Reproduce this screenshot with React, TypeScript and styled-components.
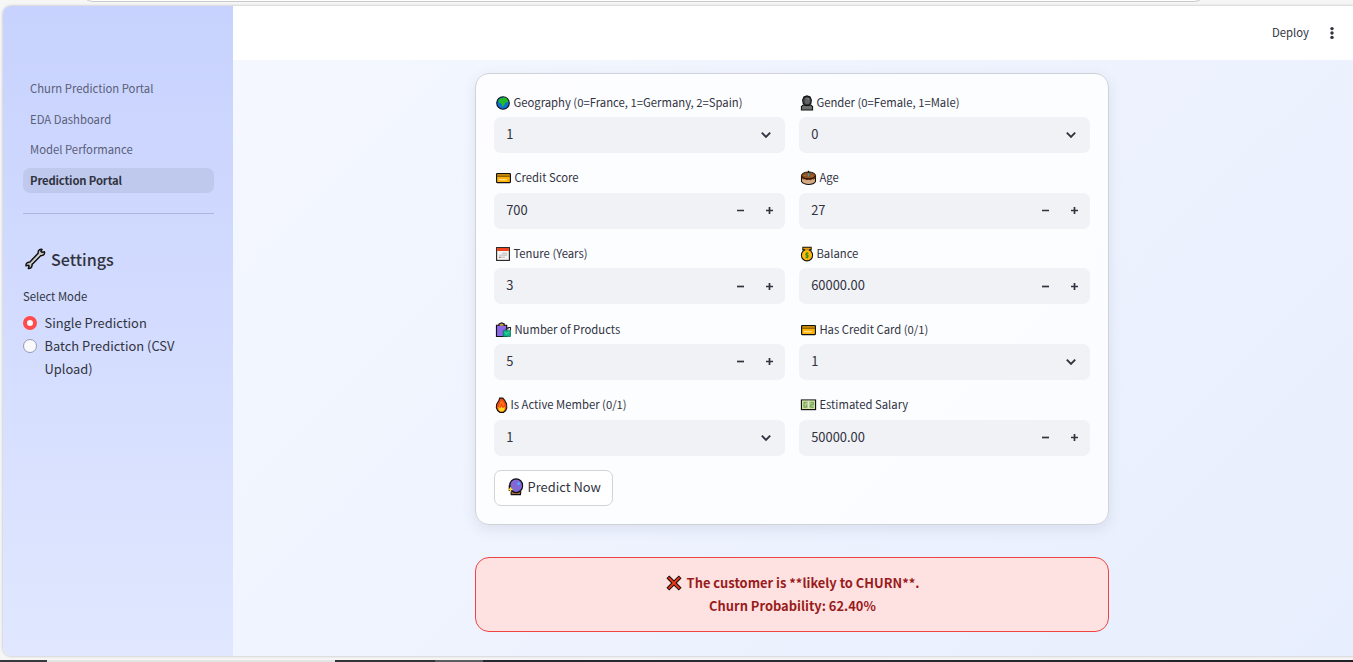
import React, { useState } from "react";
import styled, { createGlobalStyle, css } from "styled-components";

const Global = createGlobalStyle`
  * { box-sizing: border-box; }
  html, body { margin: 0; padding: 0; overflow: hidden; }
  body { background: #f6f6f6; }
  button, input { font: inherit; color: inherit; }
`;

const Screen = styled.div`
  display: flex;
  flex-direction: column;
  width: 1353px;
  height: 662px;
  overflow: hidden;
  background: #f6f6f6;
  color: #31333f;
  font-family: "Noto Sans CJK SC", "Noto Sans", sans-serif;
  font-size: 12.9px;
`;

const BrowserBar = styled.div`
  flex: none;
  display: flex;
  align-items: flex-end;
  height: 2px;
  margin-bottom: 4px;
  padding-left: 80px;
  overflow: hidden;
`;

const AddressBar = styled.div`
  flex: none;
  width: 1127px;
  height: 26px;
  border: 1px solid #c9cbcb;
  border-radius: 13px;
  background: #fff;
`;

const Window = styled.div`
  flex: none;
  display: flex;
  height: 650px;
  margin-left: 3px;
  border-radius: 8px 0 0 8px;
  overflow: hidden;
  box-shadow: 0 0 2px 1px #d5d6d9;
`;

const Sidebar = styled.aside`
  flex: none;
  width: 230px;
  padding: 70px 19px 0 20px;
  background: linear-gradient(180deg, #c7d2fe, #e0e7ff);
`;

const Nav = styled.nav`
  display: flex;
  flex-direction: column;
  gap: 5.6px;
  padding-bottom: 20px;
  border-bottom: 1px solid #adb6dc;
`;

const NavItem = styled.a<{ $active?: boolean }>`
  height: 25px;
  padding: 0 7px;
  border-radius: 7px;
  font-size: 11.3px;
  line-height: 25px;
  white-space: nowrap;
  color: #5a5e78;
  ${(p) => p.$active && css`
    background: #bec9ed;
    color: #31333f;
    font-weight: 700;
    letter-spacing: -0.15px;
  `}
`;

const Heading = styled.h2`
  display: flex;
  align-items: center;
  gap: 5px;
  height: 26px;
  margin: 32px 0 0;
  padding-left: 2px;
  font-size: 16.1px;
  font-weight: 500;
  line-height: 26px;
`;

const GroupLabel = styled.div`
  margin-top: 14px;
  font-size: 11.3px;
  line-height: 21px;
`;

const Options = styled.div`
  margin-top: 4px;
`;

const Radio = styled.label`
  display: flex;
  gap: 7.5px;
  line-height: 23px;
`;

const Dot = styled.span<{ $on: boolean }>`
  flex: none;
  width: 14px;
  height: 14px;
  margin-top: 5px;
  border-radius: 50%;
  background: #fafafc;
  border: ${(p) => (p.$on ? "4.5px solid #ff4b4b" : "1px solid #969bb5")};
`;

const Main = styled.main`
  flex: 1;
  display: flex;
  flex-direction: column;
  background: linear-gradient(135deg, #f5f8ff, #e7eefd);
`;

const Header = styled.header`
  flex: none;
  display: flex;
  justify-content: flex-end;
  align-items: center;
  gap: 20px;
  height: 54px;
  padding-right: 18px;
  background: #fff;
  font-size: 11.3px;
  line-height: 18px;
`;

const HeaderAction = styled.span`
  padding-bottom: 2px;
`;

const Content = styled.div`
  width: 634px;
  margin: 13px 0 0 242px;
`;

const Card = styled.form`
  height: 452px;
  padding: 18px;
  border: 1px solid #d0d2d8;
  border-radius: 14px;
  background: rgba(255, 255, 255, 0.8);
  box-shadow: 0 4px 14px rgba(60, 70, 110, 0.11);
`;

const Grid = styled.div`
  display: grid;
  grid-template-columns: 1fr 1fr;
  column-gap: 14px;
  row-gap: 14.4px;
`;

const Label = styled.div`
  display: flex;
  align-items: center;
  height: 21.6px;
  margin-bottom: 3.6px;
  padding-left: 1px;
  gap: 2.4px;
  font-size: 11.3px;
  line-height: 19px;
  white-space: nowrap;
`;

const LabelText = styled.span`
  padding-bottom: 0.8px;
`;

const Control = styled.div`
  display: flex;
  align-items: center;
  height: 36px;
  padding: 0 12px 0 12.2px;
  border-radius: 7px;
  background: #f0f2f6;
`;

const Value = styled.span`
  flex: 1;
  height: 36px;
  line-height: 34.6px;
`;

const Step = styled.span`
  display: flex;
  justify-content: center;
  width: 29px;
  &:last-child { margin-right: -11px; }
`;

const Predict = styled.button`
  display: flex;
  align-items: center;
  gap: 3.5px;
  width: 119px;
  height: 36px;
  margin-top: 14.4px;
  padding: 0 0 2px 12px;
  border: 1px solid #d3d4d8;
  border-radius: 7px;
  background: #fff;
  white-space: nowrap;
`;

const Alert = styled.div`
  margin-top: 32px;
  height: 75px;
  padding: 13px 0 0 1px;
  border: 1px solid #ef4444;
  border-radius: 14px;
  background: #fee2e2;
  color: #991b1b;
  font-weight: 700;
  line-height: 23px;
`;

const AlertLine = styled.div`
  display: flex;
  justify-content: center;
  align-items: center;
  height: 23px;
  gap: 5px;
`;

const Taskbar = styled.div`
  flex: none;
  display: flex;
  height: 2px;
  margin-top: 4px;
  background: linear-gradient(90deg, #23252b, #2b2b33 60%, #202024);
`;

const TaskPart = styled.span<{ $w: number; $c: string }>`
  width: ${(p) => p.$w}px;
  background: ${(p) => p.$c};
`;

type IconName = "globe" | "person" | "card" | "cake" | "calendar" | "money" | "bags" | "fire" | "cash" | "crystal" | "cross" | "wrench";

const art: Record<IconName, React.ReactNode> = {
  globe: (
    <>
      <circle cx="8" cy="8" r="6.3" fill="#0f6fd6" stroke="#111" strokeWidth="1.1" />
      <path d="M3.6 5 6 3l1.6.4 1.2-1.2 3 1.4 1.6 3-1.6 1-1.6-.2-.6 2.2-1.6 2.2-1-.4-.4-2.6L4.4 8Z" fill="#21bd20" />
    </>
  ),
  person: (
    <>
      <path d="M1.6 15v-3.4L3.6 10h8.8l2 1.6V15Z" fill="#6e6e6e" stroke="#111" strokeWidth="1.2" />
      <path d="M3.6 8.4 3 5l1.4-2.9L8 .9l3.6 1.2L13 5l-.6 3.6L9.8 10.4H6.2Z" fill="#3e3e3e" stroke="#111" strokeWidth="1.2" />
      <circle cx="8.3" cy="5.9" r="3.1" fill="#626262" />
      <path d="M6.8 3.4h3v1.6" fill="none" stroke="#8c8c8c" strokeWidth=".8" />
    </>
  ),
  card: (
    <>
      <rect x="1.5" y="3.6" width="13" height="9" rx=".5" fill="#ffb309" stroke="#111" strokeWidth="1.1" />
      <path d="M2 6.1h12" stroke="#6c460a" strokeWidth="1.2" />
      <path d="M3.5 9.6h7.5" stroke="#ffe08a" strokeWidth="1.3" />
    </>
  ),
  cake: (
    <>
      <path d="M1.4 6v5.6c2.5 3.9 10.9 3.9 13.2 0V6Z" fill="#d4aa85" stroke="#15100d" />
      <path d="M1.6 5.4v3.2l1.8 1 1.2-.4 1.6 1 1.8-.5 1.8.5 1.8-1 1.4.4 1.4-1V5.4Z" fill="#753510" />
      <ellipse cx="8" cy="5.4" rx="6.6" ry="3.4" fill="#95501f" stroke="#15100d" strokeWidth=".9" />
      <path d="M8 3.2v3.4" stroke="#27a7ba" strokeWidth="1.3" />
      <path d="M8 .8v2" stroke="#111" strokeWidth="1.2" />
      <path d="M3.8 5.4h2M10.2 6h2" stroke="#c07a40" strokeWidth=".8" />
    </>
  ),
  calendar: (
    <>
      <rect x="1.6" y="1.6" width="12.8" height="12.8" fill="#f3f3f3" stroke="#222" strokeWidth="1.1" />
      <path d="M2.1 2.1h11.8v2.8H2.1Z" fill="#f0431e" />
      <path d="M7 7.4h5.2M4 9.3h8.2M4 11.2h6" stroke="#cfcfcf" strokeWidth="1.6" />
      <path d="M4 11.4h1.6" stroke="#e07060" strokeWidth="1.3" />
    </>
  ),
  money: (
    <>
      <path d="M3.2 1.3h9.6v2.6H3.2Z" fill="#e49f10" stroke="#141006" strokeWidth="1.1" />
      <ellipse cx="8" cy="9.2" rx="6.4" ry="5.7" fill="#ffb90c" stroke="#141006" strokeWidth="1.2" />
      <path d="M5.6 3.9h4.8" stroke="#ffb90c" strokeWidth="1.2" />
      <path d="M9.8 7.3H7.1L6.6 8.8l2.9 1-.7 1.6H6.3M8.1 6v6.6" fill="none" stroke="#318d18" strokeWidth="1.1" />
    </>
  ),
  bags: (
    <>
      <path d="M1.4 3.2h9.6v11.3H1.4Z" fill="#8c68e9" stroke="#111" strokeWidth="1.1" />
      <path d="M3.8 3.8V2l2.3-1.2L8.6 2v1.8" fill="#d59f4a" stroke="#111" strokeWidth="1.2" />
      <path d="M7.8 8.2h6.8v6.3H7.8Z" fill="#06b58b" stroke="#0f6a55" strokeWidth=".7" />
      <path d="M10.6 8V6.8l1.6.2V5.4h2.4v2.8" fill="#e8e8e8" stroke="#222" />
      <path d="m9.2 10 1.8 2 2.2-2" fill="none" stroke="#48dc70" />
    </>
  ),
  fire: (
    <>
      <path d="M5.6 1.2 9.6 1l2.4 2.4 2.2 3.4.4 4-1.4 2.8-2.8 1.7H6l-2.8-1.7-1.6-3 .4-3.4L4.6 4Z" fill="#f04a16" stroke="#16100d" strokeWidth="1.2" />
      <path d="m7.4 3.2-2 4-.9 4 2-2 1.6-3 1.8 3.4 1.8-1-1.3-3.4Z" fill="#ff7415" />
      <path d="m4.2 9.8 2.2 1.4 1.6-2 1.6 2.1 2.4-1.5-.2 3-2 1.7H6.2l-1.8-1.7Z" fill="#ffda1c" />
    </>
  ),
  cash: (
    <>
      <rect x="1.4" y="3" width="13.2" height="9.6" fill="#b4cf8c" stroke="#151515" strokeWidth="1.2" />
      <rect x="2.4" y="4" width="11.2" height="7.6" fill="none" stroke="#d7e8a8" strokeWidth=".8" />
      <path d="M6.2 5.6H3.8v4.6h2.4V7.8M10 5.6h2.6v2.2H10v2.4h2.6" fill="none" stroke="#6f9a52" strokeWidth=".9" />
      <path d="M8 3.8v8" stroke="#dde6cf" strokeWidth="1.1" />
    </>
  ),
  crystal: (
    <>
      <path d="m3.8 11.8.2 3h8.6l.4-3" fill="#a66a3d" stroke="#111" strokeWidth="1.1" />
      <circle cx="8.6" cy="6.8" r="6.1" fill="#8267d7" stroke="#111" strokeWidth="1.1" />
      <path d="M1.6 6.5h1.8v5H1.6Z" fill="#111" />
      <path d="m3.3 7.6.8 1.7 1.7.8-1.7.8-.8 1.7-.8-1.7-1.7-.8 1.7-.8Z" fill="#ffe32e" />
      <path d="M11 3.5v3M9.5 5h3" stroke="#4bb5ff" />
    </>
  ),
  cross: (
    <path d="m3.2 1.2 4.8 4.7 4.8-4.7 2 2L10.1 8l4.7 4.8-2 2L8 10.1l-4.8 4.7-2-2L5.9 8 1.2 3.2Z" fill="#f03a17" stroke="#24110c" strokeWidth="1.1" />
  ),
  wrench: (
    <>
      <path
        d="M10 3C10 1.5 11.4.7 13 1l-.9 1.5.8.6 1.9-.3c.4 1.4-.4 2.5-1.9 2.7l-1 .1-6.5 6.3v.8c-.2 1.5-1.4 2.4-2.9 2.2l.7-1.7-.7-.6-1.7.4c-.3-1.4.6-2.5 2-2.7l.9-.1L10 3.8Z"
        fill="#c2c2c0"
        stroke="#111"
        strokeWidth="1.1"
        strokeLinejoin="round"
      />
      <path d="m4.8 11.2 6.4-6.4" stroke="#dedede" strokeWidth=".7" />
    </>
  ),
};

function Emoji({ name, width = 16, size = 16 }: { name: IconName; width?: number; size?: number }) {
  return (
    <svg width={width} height={size} viewBox="0 0 16 16" preserveAspectRatio="none" aria-hidden="true">
      {art[name]}
    </svg>
  );
}

const Chevron = () => (
  <svg width="14" height="14" viewBox="0 0 14 14"><path d="m2.8 4.6 4.2 4.2 4.2-4.2" fill="none" stroke="#31333f" strokeWidth="1.9" /></svg>
);
const Minus = () => (
  <svg width="9" height="9" viewBox="0 0 9 9"><path d="M1 4.5h7" stroke="#31333f" strokeWidth="1.7" /></svg>
);
const Plus = () => (
  <svg width="9" height="9" viewBox="0 0 9 9"><path d="M1 4.5h7M4.5 1v7" stroke="#31333f" strokeWidth="1.7" /></svg>
);
const Dots = () => (
  <svg width="6" height="14" viewBox="0 0 6 14" fill="#31333f"><circle cx="3" cy="2.6" r="1.7" /><circle cx="3" cy="7" r="1.7" /><circle cx="3" cy="11.4" r="1.7" /></svg>
);

type FieldData = { icon: IconName; w: number; label: string; value: string; select?: boolean };

const fields: FieldData[] = [
  { icon: "globe", w: 16, label: "Geography (0=France, 1=Germany, 2=Spain)", value: "1", select: true },
  { icon: "person", w: 14, label: "Gender (0=Female, 1=Male)", value: "0", select: true },
  { icon: "card", w: 17, label: "Credit Score", value: "700" },
  { icon: "cake", w: 17, label: "Age", value: "27" },
  { icon: "calendar", w: 16, label: "Tenure (Years)", value: "3" },
  { icon: "money", w: 14, label: "Balance", value: "60000.00" },
  { icon: "bags", w: 17, label: "Number of Products", value: "5" },
  { icon: "card", w: 17, label: "Has Credit Card (0/1)", value: "1", select: true },
  { icon: "fire", w: 13, label: "Is Active Member (0/1)", value: "1", select: true },
  { icon: "cash", w: 17, label: "Estimated Salary", value: "50000.00" },
];

function Field({ icon, w, label, value, select }: FieldData) {
  return (
    <div>
      <Label><Emoji name={icon} width={w} /><LabelText>{label}</LabelText></Label>
      <Control>
        <Value>{value}</Value>
        {select ? <Chevron /> : <><Step><Minus /></Step><Step><Plus /></Step></>}
      </Control>
    </div>
  );
}

const pages = ["Churn Prediction Portal", "EDA Dashboard", "Model Performance", "Prediction Portal"];
const modes = ["Single Prediction", "Batch Prediction (CSV Upload)"];

export default function App() {
  const [mode, setMode] = useState(0);
  return (
    <Screen>
      <Global />
      <BrowserBar><AddressBar /></BrowserBar>
      <Window>
        <Sidebar>
          <Nav>
            {pages.map((p, i) => <NavItem key={p} $active={i === 3}>{p}</NavItem>)}
          </Nav>
          <Heading><Emoji name="wrench" width={21} size={22} />Settings</Heading>
          <GroupLabel>Select Mode</GroupLabel>
          <Options>
            {modes.map((m, i) => (
              <Radio key={m} onClick={() => setMode(i)}><Dot $on={mode === i} /><span>{m}</span></Radio>
            ))}
          </Options>
        </Sidebar>
        <Main>
          <Header><HeaderAction>Deploy</HeaderAction><Dots /></Header>
          <Content>
            <Card>
              <Grid>{fields.map((f) => <Field key={f.label} {...f} />)}</Grid>
              <Predict type="button"><Emoji name="crystal" width={17} size={18} />Predict Now</Predict>
            </Card>
            <Alert>
              <AlertLine><Emoji name="cross" width={16} />The customer is **likely to CHURN**.</AlertLine>
              <AlertLine>Churn Probability: 62.40%</AlertLine>
            </Alert>
          </Content>
        </Main>
      </Window>
      <Taskbar>
        <TaskPart $w={47} $c="#38393c" />
        <TaskPart $w={288} $c="#e4e4e4" />
        <TaskPart $w={100} $c="#333437" />
        <TaskPart $w={48} $c="#5c5d60" />
      </Taskbar>
    </Screen>
  );
}
